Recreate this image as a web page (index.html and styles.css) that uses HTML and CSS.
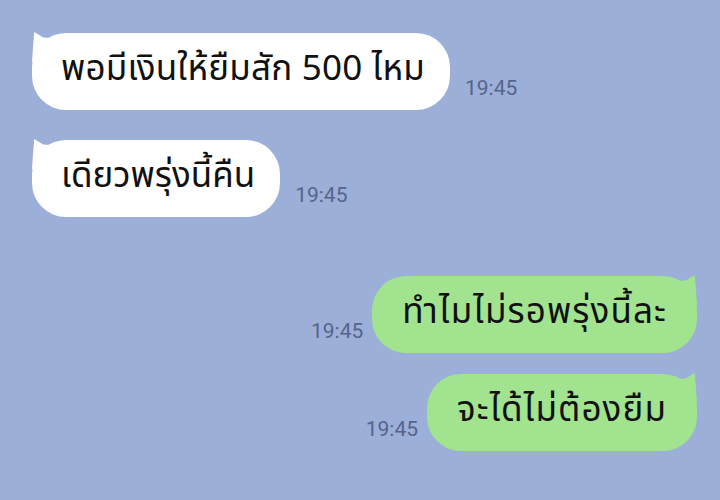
FILE: index.html
```html
<!DOCTYPE html>
<html lang="th">
<head>
    <meta charset="UTF-8">
    <meta name="viewport" content="width=device-width, initial-scale=1.0">
    <title>แชท</title>
    <link rel="stylesheet" href="styles.css">
</head>
<body>
    <div class="chat">
        <div class="row row-in first">
            <div class="bubble bubble-in">พอมีเงินให้ยืมสัก 500 ไหม</div>
            <span class="time">19:45</span>
        </div>
        <div class="row row-in second">
            <div class="bubble bubble-in">เดียวพรุ่งนี้คืน</div>
            <span class="time">19:45</span>
        </div>
        <div class="row row-out third">
            <span class="time">19:45</span>
            <div class="bubble bubble-out">ทำไมไม่รอพรุ่งนี้ละ</div>
        </div>
        <div class="row row-out fourth">
            <span class="time">19:45</span>
            <div class="bubble bubble-out">จะได้ไม่ต้องยืม</div>
        </div>
    </div>
</body>
</html>
```

FILE: styles.css
```css
:root {
    --bg-color: #9cafd9;
    --in-color: #ffffff;
    --out-color: #a1e38f;
    --text-color: #111111;
    --time-color: #56648a;
}

* {
    margin: 0;
    padding: 0;
    box-sizing: border-box;
}

body {
    font-family: 'Noto Sans Thai', 'Noto Sans', 'DejaVu Sans', sans-serif;
    background-color: var(--bg-color);
    width: 720px;
    height: 500px;
    overflow: hidden;
}

.chat {
    display: flex;
    flex-direction: column;
    padding: 33px 23px 0 32px;
}

.row {
    display: flex;
    align-items: flex-end;
    gap: 15px;
}

.row-out {
    justify-content: flex-end;
    gap: 9px;
}

.second {
    margin-top: 30px;
}

.third {
    margin-top: 59px;
}

.fourth {
    margin-top: 21px;
}

.bubble {
    position: relative;
    height: 77px;
    display: flex;
    align-items: center;
    padding: 0 25px 4px 29px;
    border-radius: 34px;
    font-size: 35px;
    color: var(--text-color);
    white-space: nowrap;
}

.bubble-in {
    background-color: var(--in-color);
}

.first {
    letter-spacing: 0.2px;
}

.bubble-out {
    background-color: var(--out-color);
    padding: 0 30px 4px 30px;
    letter-spacing: 1.1px;
}

/* petites queues des bulles */
.bubble::before {
    content: '';
    position: absolute;
    top: -1px;
    width: 28px;
    height: 30px;
}

.bubble-in::before {
    left: 0;
    background-color: var(--in-color);
    clip-path: polygon(8% 0, 40% 18%, 100% 22%, 100% 100%, 0 100%, 4% 45%);
}

.bubble-out::before {
    right: 0;
    background-color: var(--out-color);
    clip-path: polygon(92% 0, 60% 18%, 0 22%, 0 100%, 100% 100%, 96% 45%);
}

.time {
    font-family: 'Roboto', sans-serif;
    font-size: 21px;
    letter-spacing: 0;
    color: var(--time-color);
    padding-bottom: 10px;
}
```
